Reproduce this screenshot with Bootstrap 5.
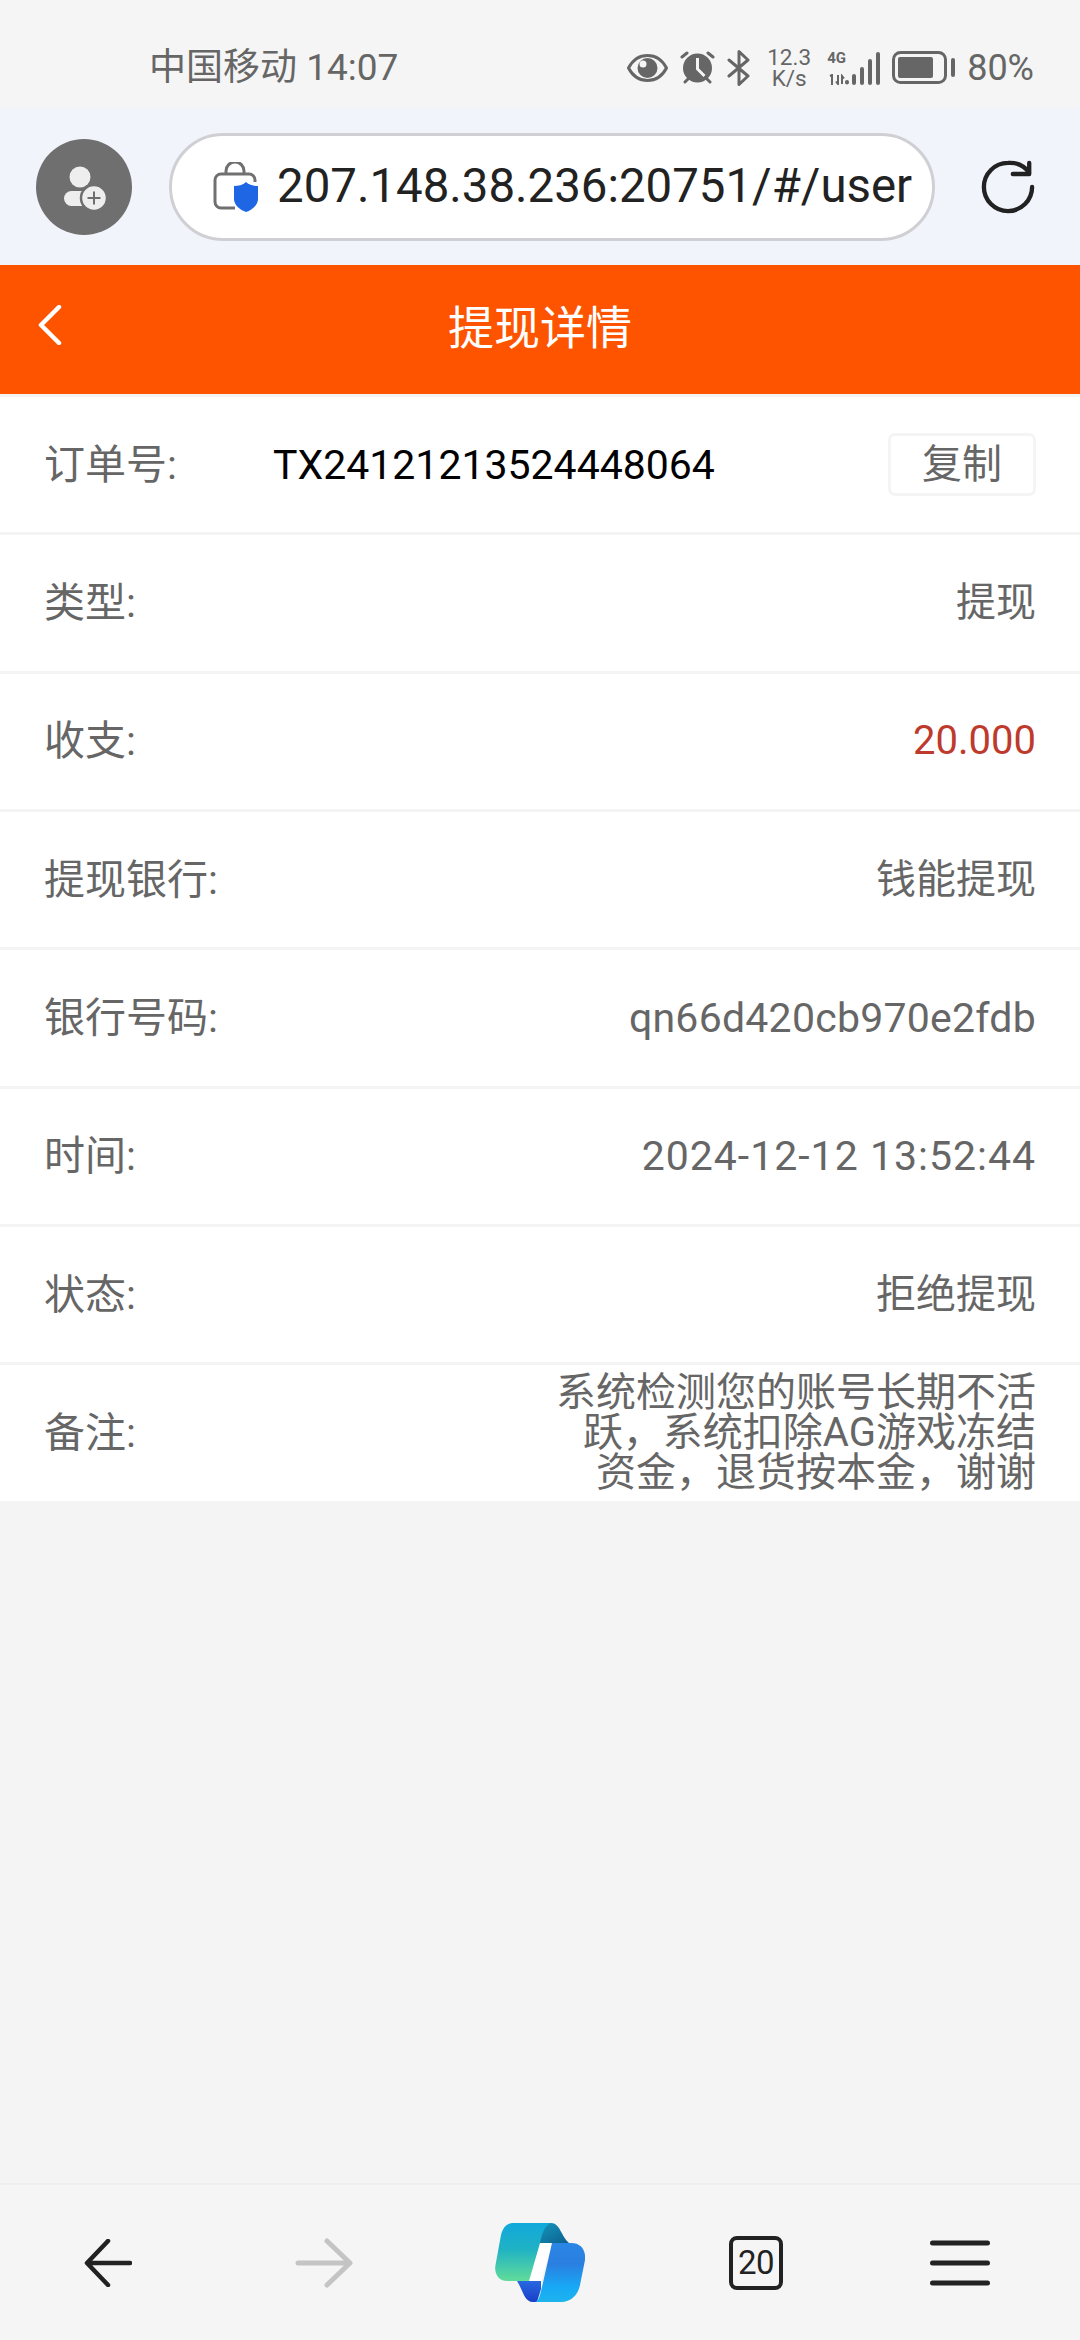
<!doctype html>
<html lang="zh-CN">
<head>
<meta charset="utf-8">
<title>提现详情</title>
<link href="https://cdn.jsdelivr.net/npm/bootstrap@5.3.0/dist/css/bootstrap.min.css" rel="stylesheet">
<style>
html,body{height:100%}
body{width:1080px;height:2340px;overflow:hidden;background:#f4f4f4;font-family:Roboto,"Noto Sans CJK SC",sans-serif;color:#666}
.screen{height:2340px}
.status-strip{height:108px;background:#f5f5f5;padding:27px 46px 0 149px;font-size:37px;color:#666;line-height:1}
.status-icons{gap:12px;font-size:36px}
.net-speed{width:46px;font-size:22.5px;line-height:21px;text-align:center;margin:0 3px 0 4px}
.signal-text{font-size:15px;font-weight:700;line-height:1;width:18px}
.browser-strip{height:157px;background:#f2f4fc;padding:0 45px 0 36px}
.avatar-dot{width:96px;height:96px;border-radius:50%;background:#6f6f6f;flex:none}
.url-pill{width:766px;height:108px;margin-left:37px;margin-right:46px;border:3px solid #d0d0d4;border-radius:54px;background:#fff;padding-left:41px;flex:none;overflow:hidden}
.url-text{font-size:47.4px;color:#222;margin-left:18px;white-space:nowrap;line-height:1}
.title-strip{height:129px;background:#fe5400;color:#fff}
.title-strip h1{font-size:46px;font-weight:400;margin:0;line-height:1;padding-bottom:4px}
.back-mark{position:absolute;left:38px;top:40px}
.detail-list{gap:3px;padding-top:3px;background:#f4f4f4;border-radius:0}
.detail-row{height:135.33px;border:0!important;padding:0 44px 0 44px;font-size:40px;color:#666;background:#fff;line-height:40px;border-radius:0!important}
.row-label{font-size:41px}
.order-label{font-size:41px;width:229px;flex:none}
.order-no{color:#000;font-size:41px}
.copy-btn{width:148px;height:63px;border:3px solid #f4f4f4;border-radius:7px;background:#fff;color:#666;font-size:40px;line-height:1;padding:0}
.money{color:#bd3a2c;font-size:40px}
.code-text{font-size:41px;letter-spacing:.25px}
.time-text{font-size:41px;letter-spacing:1px}
.note-text{width:484px;text-align:right;font-size:40px;line-height:40px}
.filler{flex:1 1 auto}
.tool-strip{height:157px;background:#f5f5f5;border-top:2px solid #eee}
.tool-cell{width:216px;flex:none}
.tab-count{width:54px;height:54px;border:4px solid #222;border-radius:8px;font-size:33px;color:#222;line-height:1;letter-spacing:-.5px}
.menu-cell{padding-right:24px}
</style>
</head>
<body>
<div class="screen d-flex flex-column">
  <div class="status-strip d-flex justify-content-between align-items-center">
    <span>中国移动 14:07</span>
    <div class="status-icons d-flex align-items-center">
      <svg width="41" height="28" viewBox="0 0 41 28"><path d="M1.500 14C6 5.500 13 1.500 20.500 1.500S35 5.500 39.500 14C35 22.500 28 26.500 20.500 26.500S6 22.500 1.500 14Z" fill="none" stroke="#666" stroke-width="3" stroke-linejoin="round"/><circle cx="20.500" cy="14" r="10" fill="#666"/><circle cx="16" cy="10" r="3.500" fill="#f5f5f5"/></svg>
      <svg width="35" height="33" viewBox="0 0 35 33"><circle cx="17.500" cy="17" r="14.500" fill="#666"/><path d="M17.500 7v11l7 7" fill="none" stroke="#f5f5f5" stroke-width="3"/><path d="M2 6l5-4M33 6l-5-4M5 31l3-3M30 31l-3-3" stroke="#666" stroke-width="3" stroke-linecap="round"/></svg>
      <svg width="23" height="36" viewBox="0 0 23 36"><path d="M2 10l19 16-9 8.500V1.500l9 8.500L2 26" fill="none" stroke="#666" stroke-width="3" stroke-linejoin="round" stroke-linecap="round"/></svg>
      <div class="net-speed">12.3<br>K/s</div>
      <div class="d-flex align-items-end">
        <div class="signal-text">4G<br><svg class="mt-2 d-block" width="18" height="11" viewBox="0 0 18 11"><path d="M3 2l2-1v10M11 1v9l-2-2.500M15 10V2l2 2.500" fill="none" stroke="#666" stroke-width="2"/></svg></div>
        <svg width="35" height="33" viewBox="0 0 35 33"><path d="M2 30v.5M9 24v7M17 17v14M25 9v22M33 2v29" stroke="#666" stroke-width="4" stroke-linecap="round" fill="none"/></svg>
      </div>
      <svg width="63" height="33" viewBox="0 0 63 33"><rect x="1.500" y="1.500" width="52" height="30" rx="7" fill="none" stroke="#666" stroke-width="3"/><rect x="6" y="6" width="35" height="21" rx="2" fill="#666"/><rect x="59" y="7" width="4" height="19" rx="2" fill="#666"/></svg>
      <span>80%</span>
    </div>
  </div>

  <div class="browser-strip d-flex align-items-center">
    <div class="avatar-dot d-flex align-items-center justify-content-center">
      <svg width="96" height="96" viewBox="0 0 96 96"><circle cx="44" cy="38" r="10.500" fill="#eee"/><rect x="28" y="52" width="34" height="15" rx="7.500" fill="#eee"/><circle cx="58" cy="59" r="13" fill="#eee" stroke="#6f6f6f" stroke-width="2.500"/><path d="M51.500 59h13M58 52.500v13" stroke="#6f6f6f" stroke-width="2"/></svg>
    </div>
    <div class="url-pill d-flex align-items-center">
      <svg width="46" height="50" viewBox="0 0 46 50" class="flex-shrink-0"><path d="M13 12V9a9 9 0 0 1 18 0v3" fill="none" stroke="#707070" stroke-width="3"/><path d="M22 46H8a6 6 0 0 1-6-6V18a6 6 0 0 1 6-6h28a6 6 0 0 1 6 6v2" fill="none" stroke="#707070" stroke-width="3"/><path d="M33 20c3 3 8 4 12 4v13c0 6-6 11-12 13-6-2-12-7-12-13V24c4 0 9-1 12-4Z" fill="#1f66e5"/></svg>
      <span class="url-text">207.148.38.236:20751/#/user</span>
    </div>
    <svg width="56" height="56" viewBox="0 0 56 56"><path d="M50 13A25 25 0 0 0 28 3A25 25 0 1 0 53 28M50 3v11.500H33" fill="none" stroke="#222" stroke-width="4.500" stroke-linecap="round" stroke-linejoin="round"/></svg>
  </div>

  <div class="title-strip d-flex align-items-center justify-content-center position-relative">
    <svg class="back-mark" width="24" height="40" viewBox="0 0 24 40"><path d="M21 2L3 20l18 18" fill="none" stroke="#fff" stroke-width="4.500" stroke-linecap="round" stroke-linejoin="round"/></svg>
    <h1>提现详情</h1>
  </div>

  <div class="list-group list-group-flush detail-list">
    <div class="list-group-item detail-row d-flex align-items-center">
      <span class="order-label">订单号:</span><span class="order-no me-auto">TX24121213524448064</span>
      <button type="button" class="btn copy-btn">复制</button>
    </div>
    <div class="list-group-item detail-row d-flex justify-content-between align-items-center"><span class="row-label">类型:</span><span>提现</span></div>
    <div class="list-group-item detail-row d-flex justify-content-between align-items-center"><span class="row-label">收支:</span><span class="money">20.000</span></div>
    <div class="list-group-item detail-row d-flex justify-content-between align-items-center"><span class="row-label">提现银行:</span><span>钱能提现</span></div>
    <div class="list-group-item detail-row d-flex justify-content-between align-items-center"><span class="row-label">银行号码:</span><span class="code-text">qn66d420cb970e2fdb</span></div>
    <div class="list-group-item detail-row d-flex justify-content-between align-items-center"><span class="row-label">时间:</span><span class="time-text">2024-12-12 13:52:44</span></div>
    <div class="list-group-item detail-row d-flex justify-content-between align-items-center"><span class="row-label">状态:</span><span>拒绝提现</span></div>
    <div class="list-group-item detail-row d-flex justify-content-between align-items-center"><span class="row-label">备注:</span><span class="note-text">系统检测您的账号长期不活跃，系统扣除AG游戏冻结资金，退货按本金，谢谢</span></div>
  </div>

  <div class="filler"></div>

  <div class="tool-strip d-flex align-items-center">
    <div class="tool-cell d-flex justify-content-center"><svg width="48" height="48" viewBox="0 0 48 48"><path d="M46 24H4M24 2L3 24l21 22" fill="none" stroke="#222" stroke-width="4.500" stroke-linecap="round" stroke-linejoin="round"/></svg></div>
    <div class="tool-cell d-flex justify-content-center"><svg width="58" height="50" viewBox="0 0 58 50"><path d="M3 25h50M32 3l23 22-23 22" fill="none" stroke="#c4c4c4" stroke-width="5" stroke-linecap="round" stroke-linejoin="round"/></svg></div>
    <div class="tool-cell d-flex justify-content-center">
      <svg width="90" height="79" viewBox="0 0 90 79">
        <defs>
          <linearGradient id="gLeft" x1="0" y1="0" x2="0" y2="1"><stop offset="0" stop-color="#11a8dc"/><stop offset=".45" stop-color="#1fb2c4"/><stop offset="1" stop-color="#62dc9a"/></linearGradient>
          <linearGradient id="gRight" x1="0" y1="0" x2="0" y2="1"><stop offset="0" stop-color="#2a86e6"/><stop offset=".35" stop-color="#2b7fe0"/><stop offset=".75" stop-color="#17a9f5"/><stop offset="1" stop-color="#1db4ee"/></linearGradient>
          <linearGradient id="gFoldTop" x1="0" y1="0" x2="1" y2="1"><stop offset="0" stop-color="#1596bd"/><stop offset="1" stop-color="#0c5f8f"/></linearGradient>
          <linearGradient id="gFoldBot" x1="0" y1="0" x2="0" y2="1"><stop offset="0" stop-color="#2868e0"/><stop offset="1" stop-color="#1a3fc8"/></linearGradient>
        </defs>
        <path d="M45 20H57L46 58H34Z" fill="#fff"/>
        <path d="M44 0H56C65 0 66 13 74 20H44Z" fill="url(#gFoldTop)"/>
        <path d="M22 58H46V66L42 79H38C29 79 28 67 22 58Z" fill="url(#gFoldBot)"/>
        <path d="M19 0H56C50 2 47 10 45 20L34 58H12C3 58-1 50 .5 42L6 12C8 4 12 0 19 0Z" fill="url(#gLeft)"/>
        <path d="M57 20H76C86 20 91 27 90 37L85 62C83 72 76 79 66 79H40C44 78 45 72 47 64Z" fill="url(#gRight)"/>
      </svg>
    </div>
    <div class="tool-cell d-flex justify-content-center"><div class="tab-count d-flex align-items-center justify-content-center">20</div></div>
    <div class="tool-cell d-flex justify-content-center menu-cell"><svg width="60" height="46" viewBox="0 0 60 46"><path d="M2.500 3h55M2.500 23h55M2.500 43h55" stroke="#222" stroke-width="5" stroke-linecap="round"/></svg></div>
  </div>
</div>
<script src="https://cdn.jsdelivr.net/npm/bootstrap@5.3.0/dist/js/bootstrap.bundle.min.js"></script>
</body>
</html>
